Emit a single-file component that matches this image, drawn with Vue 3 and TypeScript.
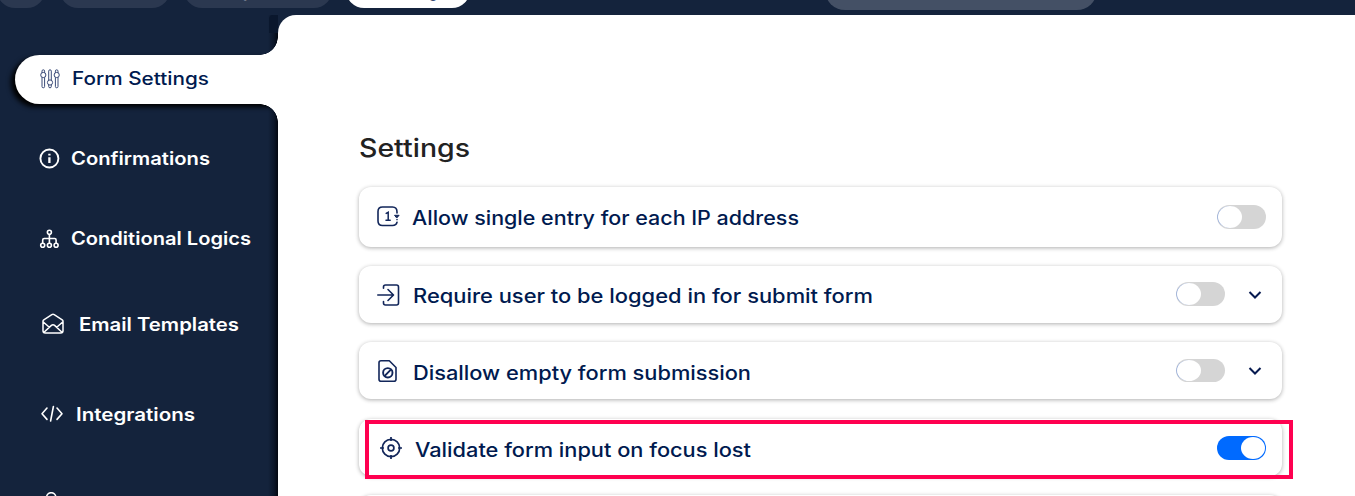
<script setup lang="ts">
interface NavItem { id: string; label: string; width: number }
interface Setting { id: string; label: string; width: number; on: boolean; expandable: boolean }

const nav: NavItem[] = [
  { id: 'form', label: 'Form Settings', width: 137 },
  { id: 'confirm', label: 'Confirmations', width: 139 },
  { id: 'logic', label: 'Conditional Logics', width: 180 },
  { id: 'email', label: 'Email Templates', width: 160 },
  { id: 'code', label: 'Integrations', width: 119 },
]

const settings: Setting[] = [
  { id: 'single', label: 'Allow single entry for each IP address', width: 387, on: false, expandable: false },
  { id: 'login', label: 'Require user to be logged in for submit form', width: 460, on: false, expandable: true },
  { id: 'empty', label: 'Disallow empty form submission', width: 338, on: false, expandable: true },
  { id: 'focus', label: 'Validate form input on focus lost', width: 336, on: true, expandable: false },
]

// Stretches a label horizontally to its column width.
const vFit = {
  mounted(el: HTMLElement, binding: { value: number }) {
    el.style.transform = `scaleX(${binding.value / el.getBoundingClientRect().width})`
  },
}
</script>

<template>
  <div class="page">
    <header class="topbar">
      <span class="pill p1"></span>
      <span class="pill p2"></span>
      <span class="pill p3">Responses</span>
      <span class="pill p4">Settings</span>
      <span class="search"></span>
    </header>
    <div class="body">
      <nav class="sidebar">
        <a v-for="item in nav" :key="item.id" class="item" :class="item.id">
          <svg v-if="item.id === 'form'" width="22" height="22" viewBox="0 0 22 22" fill="#fff" stroke="#3a4a78" stroke-width="1">
            <rect x="3" y="1.8" width="2.6" height="18" rx="1.3" /><rect x="9.7" y="1.8" width="2.6" height="18" rx="1.3" /><rect x="16.4" y="1.8" width="2.6" height="18" rx="1.3" />
            <circle cx="4.3" cy="7" r="2.6" /><circle cx="11" cy="14.5" r="2.6" /><circle cx="17.7" cy="7" r="2.6" />
          </svg>
          <svg v-else-if="item.id === 'confirm'" width="22" height="22" viewBox="0 0 22 22" fill="none" stroke="#fff" stroke-width="1.9">
            <circle cx="11.4" cy="10.5" r="9" /><path d="M11.4 9.2V15.1M11.4 5.7V7.5" stroke-width="2.3" />
          </svg>
          <svg v-else-if="item.id === 'logic'" width="22" height="22" viewBox="0 0 22 22" fill="none" stroke="#fff" stroke-width="1.6">
            <circle cx="11.4" cy="4.2" r="2" /><circle cx="4.7" cy="17.3" r="2" /><circle cx="11.4" cy="17.3" r="2" /><circle cx="18.1" cy="17.3" r="2" />
            <path d="M11.4 6.2V15.3M4.700 15.3V12Q4.700 10.5 6.2 10.5H16.6Q18.1 10.5 18.1 12V15.3" />
          </svg>
          <svg v-else-if="item.id === 'email'" width="24" height="24" viewBox="0 0 24 24" fill="none" stroke="#fff" stroke-width="1.5" stroke-linejoin="round" stroke-linecap="round">
            <path d="M2 9.2Q2 8.3 2.8 7.8L10.800 2.7Q12 2 13.2 2.7L21.2 7.8Q22 8.3 22 9.2V18.7Q22 21 19.7 21H4.3Q2 21 2 18.7ZM2.3 10L8.3 15.2M21.7 10L15.7 15.2M3 20.2L10.4 13.4Q12 12 13.6 13.4L21 20.2" />
          </svg>
          <svg v-else width="24" height="22" viewBox="0 0 24 22" fill="none" stroke="#fff" stroke-width="1.6" stroke-linecap="round" stroke-linejoin="round">
            <path d="M7 4L2 9.7L7 15.4M17 4L22 9.7L17 15.4M13.4 2.500L10.6 17" />
          </svg>
          <span v-fit="item.width" class="label">{{ item.label }}</span>
        </a>
        <a class="item more">
          <svg width="22" height="22" viewBox="0 0 22 22" fill="none" stroke="#fff" stroke-width="1.6"><circle cx="11.2" cy="5.3" r="4.6" /></svg>
          <span v-fit="103" class="label">Conversion</span>
        </a>
      </nav>
      <main class="content">
        <h1><span v-fit="111" class="label">Settings</span></h1>
        <section v-for="s in settings" :key="s.id" class="card" :class="s.id">
          <svg v-if="s.id === 'single'" class="icon" width="24" height="24" viewBox="0 0 24 24" fill="none" stroke="#12265a" stroke-width="1.6" stroke-linecap="round">
            <path d="M21 8V7Q21 2 16.5 2H6.5Q2 2 2 6.500V16Q2 20.500 6.5 20.500H16.5Q20.2 20.500 21 17.300M21 14.5V14.6" /><path d="M18.900 10.300H23.1L21 12.700Z" fill="#12265a" stroke-width="1" /><path d="M10.2 8.400L12.2 7.3V15M10 15.200H14.2" stroke-width="1.5" />
          </svg>
          <svg v-else-if="s.id === 'login'" class="icon" width="24" height="24" viewBox="0 0 24 24" fill="none" stroke="#12265a" stroke-width="1.6" stroke-linecap="round" stroke-linejoin="round">
            <path d="M6.500 5.2V4Q6.500 2 8.500 2H19.500Q21.500 2 21.500 4V20Q21.500 22 19.500 22H8.500Q6.500 22 6.500 20V18.5M.8 12H16M11 6.5L16.500 12L11 17.5" />
          </svg>
          <svg v-else-if="s.id === 'empty'" class="icon" width="24" height="24" viewBox="0 0 24 24" fill="none" stroke="#12265a" stroke-width="1.6" stroke-linejoin="round">
            <path d="M5 1.8H13.3L20 8.5V20.3Q20 22.3 18 22.3H5Q3 22.3 3 20.3V3.8Q3 1.8 5 1.8Z" /><circle cx="11.8" cy="13.8" r="4.7" stroke-width="1.9" /><path d="M8.7 16.9L14.9 10.7" stroke-width="1.9" />
          </svg>
          <svg v-else class="icon" width="24" height="24" viewBox="0 0 24 24" fill="none" stroke="#12265a" stroke-width="1.7">
            <circle cx="12" cy="12" r="8.7" /><circle cx="12" cy="12" r="2.9" /><path d="M12 1V5M12 19V23M1 12H5M19 12H23" />
          </svg>
          <span v-fit="s.width" class="label">{{ s.label }}</span>
          <span class="toggle" :class="{ on: s.on }"></span>
          <svg v-if="s.expandable" class="chev" width="14" height="10" viewBox="0 0 14 10" fill="none" stroke="#071a50" stroke-width="2"><path d="M1.5 2L7 7.5L12.500 2" /></svg>
        </section>
        <section class="card next"></section>
        <div class="highlight"></div>
      </main>
    </div>
  </div>
</template>

<style>
body { overflow: hidden; }
</style>

<style scoped>
.page { width: 1355px; height: 496px; overflow: hidden; background: #14233c; font-family: Inter, "Open Sans", sans-serif; color: #001a4f; }
.page * { box-sizing: border-box; }
.topbar { height: 15px; display: flex; align-items: flex-end; overflow: hidden; }
.pill { height: 36px; margin-bottom: 7px; border-radius: 18px; background: #2b3850; color: #fff; font-size: 17px; line-height: 38px; font-weight: 600; text-align: center; flex: none; }
.p1 { width: 48px; margin-left: -3px; }
.p2 { width: 110px; margin-left: 15px; }
.p3 { width: 148px; margin-left: 14px; }
.p4 { width: 124px; margin-left: 14px; padding-left: 12px; background: #fff; color: #001a4f; }
.search { height: 40px; width: 272px; margin: 0 0 5px 355px; border-radius: 20px; background: #445065; flex: none; }
.body { display: flex; height: 481px; }
.label { display: inline-block; white-space: nowrap; transform-origin: 0 50%; flex: none; }
.sidebar { width: 278px; flex: none; padding-top: 40px; display: flex; flex-direction: column; position: relative; background: linear-gradient(to left, #030710 0, #0b1629 4px, #14233c 10px); }
.sidebar::before { content: ""; position: absolute; right: 0; top: 0; width: 9px; height: 18px; background: #0a172d; border-top-left-radius: 4px; }
.item { height: 49px; flex: none; display: flex; align-items: center; padding-left: 38px; color: #fff; font-size: 18px; font-weight: 600; position: relative; }
.item svg { flex: none; }
.item .label { margin-left: 11px; }
.form { margin-left: 15px; padding: 0 0 2px 23.500px; background: #fff; border-radius: 25px 0 0 25px; color: #001a4f; font-weight: 500; box-shadow: -4px 3px 5px #000; }
.form::before, .form::after { content: ""; position: absolute; right: 0; width: 18px; height: 18px; }
.form::before { top: -18px; background: radial-gradient(circle at 0 0, transparent 17.500px, #fff 18px); }
.form::after { top: 49px; background: radial-gradient(circle at 0 100%, transparent 17.500px, #fff 18px); }
.confirm { margin-top: 30px; }
.logic { margin-top: 31px; }
.email { margin-top: 37px; padding-left: 41px; }
.email svg { position: relative; top: -1px; }
.email .label { margin-left: 14px; }
.code { margin-top: 41px; padding-left: 40px; }
.code .label { margin-left: 12px; }
.more { margin-top: 39px; padding-left: 40px; }
.more .label { margin-left: 17px; position: relative; top: 1.500px; }
.content { flex: 1; background: #fff; border-top-left-radius: 18px; padding: 116px 73px 0 81px; position: relative; z-index: 1; }
h1 { margin: 0; height: 56px; line-height: 34px; font-size: 25px; font-weight: 500; color: #222; }
.card { height: 57px; margin-bottom: 19px; border-radius: 12px; background: #fff; box-shadow: 0 1px 4px rgba(0, 0, 0, .32); display: flex; align-items: center; padding: 0 16px 0 17px; font-size: 19.500px; font-weight: 500; }
.single { height: 60px; }
.focus { margin-top: 20px; }
.icon { flex: none; }
.card .label { margin-left: 12px; position: relative; top: 1px; }
.card.empty .label, .card.focus .label { top: 2px; }
.card.login { padding-left: 17.500px; }
.card.empty .label { margin-left: 12.500px; }
.card.focus { padding-left: 19.500px; }
.toggle { width: 49px; height: 24px; border-radius: 12px; background: #d5d5d5; margin-left: auto; flex: none; padding: 1px; display: flex; }
.login .toggle, .empty .toggle { position: relative; top: -1px; }
.toggle::before { content: ""; width: 24px; height: 22px; border-radius: 50%; background: #fff; box-shadow: -1px 0 0 -.3px rgba(50, 110, 230, .45); }
.empty .toggle { height: 23px; top: 0; }
.empty .toggle::before { height: 21px; }
.toggle.on { background: #006aff; justify-content: flex-end; }
.toggle.on::before { box-shadow: none; width: 24px; }
.chev { margin-left: 23px; margin-right: 4px; flex: none; }
.highlight { position: absolute; left: 86.500px; top: 405px; width: 928.500px; height: 59px; border: 4px solid #ff0050; }
</style>
